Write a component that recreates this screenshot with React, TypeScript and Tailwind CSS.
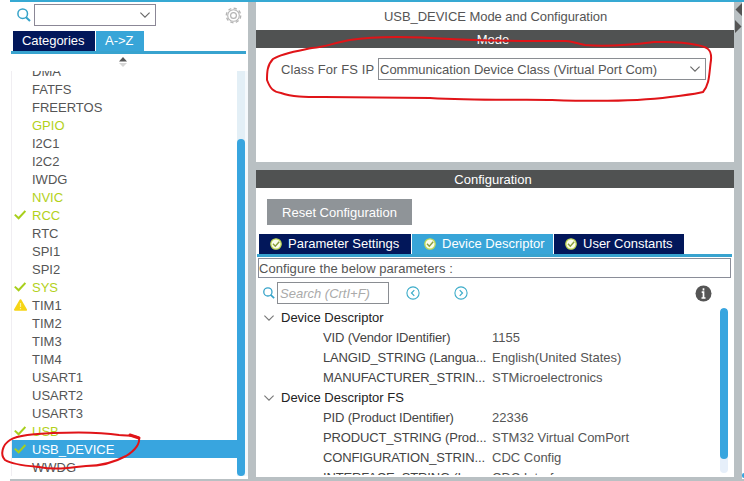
import React from "react";

type Mark = "check" | "warn";
type Peripheral = { name: string; mark?: Mark; green?: boolean; selected?: boolean };

const peripherals: Peripheral[] = [
  { name: "DMA" },
  { name: "FATFS" },
  { name: "FREERTOS" },
  { name: "GPIO", green: true },
  { name: "I2C1" },
  { name: "I2C2" },
  { name: "IWDG" },
  { name: "NVIC", green: true },
  { name: "RCC", green: true, mark: "check" },
  { name: "RTC" },
  { name: "SPI1" },
  { name: "SPI2" },
  { name: "SYS", green: true, mark: "check" },
  { name: "TIM1", mark: "warn" },
  { name: "TIM2" },
  { name: "TIM3" },
  { name: "TIM4" },
  { name: "USART1" },
  { name: "USART2" },
  { name: "USART3" },
  { name: "USB", green: true, mark: "check" },
  { name: "USB_DEVICE", mark: "check", selected: true },
  { name: "WWDG" },
];

const groups = [
  {
    title: "Device Descriptor",
    rows: [
      ["VID (Vendor IDentifier)", "1155"],
      ["LANGID_STRING (Langua...", "English(United States)"],
      ["MANUFACTURER_STRIN...", "STMicroelectronics"],
    ],
  },
  {
    title: "Device Descriptor FS",
    rows: [
      ["PID (Product IDentifier)", "22336"],
      ["PRODUCT_STRING (Prod...", "STM32 Virtual ComPort"],
      ["CONFIGURATION_STRIN...", "CDC Config"],
      ["INTERFACE_STRING (I...", "CDC Interface"],
    ],
  },
];

function Search({ className }: { className: string }) {
  return (
    <svg className={className} viewBox="0 0 14 14" fill="none" stroke="#36a3c9">
      <circle cx="5.7" cy="5.7" r="4.8" strokeWidth="1.5" />
      <path d="M9 9.2 13 13" strokeWidth="2" />
    </svg>
  );
}

function Chevron({ color = "#666" }: { color?: string }) {
  return (
    <svg className="h-[6px] w-[10px] shrink-0" viewBox="0 0 10 6" fill="none" stroke={color} strokeWidth="1.1">
      <path d="M.4.6 5 5.2 9.6.6" />
    </svg>
  );
}

function StatusIcon({ mark }: { mark?: Mark }) {
  if (mark === "check")
    return (
      <svg className="h-[10px] w-[12px]" viewBox="0 0 12 10" fill="none" stroke="#a8cf1c" strokeWidth="2">
        <path d="M.8 4.6 4.6 8.3 11.4 1" />
      </svg>
    );
  if (mark === "warn")
    return (
      <svg className="h-[12px] w-[13px]" viewBox="0 0 13 12">
        <path d="M6.5 1.2 12 10.8H1Z" fill="#f6d516" stroke="#f6d516" strokeWidth="2" strokeLinejoin="round" />
        <path d="M6.5 4v4M6.5 9v1.3" stroke="#fff3a0" strokeWidth="1.2" />
      </svg>
    );
  return null;
}

function TabCheck() {
  return (
    <svg className="size-[12px] shrink-0" viewBox="0 0 12 12">
      <circle cx="6" cy="6" r="5.2" fill="#fbfdec" stroke="#c3d954" strokeWidth="1.3" />
      <path d="M3 5.8 5.3 8.2 9.2 3.8" fill="none" stroke="#8a9f3c" strokeWidth="1.4" />
    </svg>
  );
}

function Gear() {
  return (
    <svg className="size-[17px]" viewBox="0 0 17 17" fill="none" stroke="#b5b5b5">
      <circle cx="8.5" cy="8.5" r="7.2" strokeWidth="1.4" strokeDasharray="3.2 2.45" />
      <circle cx="8.5" cy="8.5" r="5.8" strokeWidth="1.1" />
      <circle cx="8.5" cy="8.5" r="2.9" strokeWidth="1.2" />
    </svg>
  );
}

function StepButton({ d }: { d: string }) {
  return (
    <svg className="size-[14px]" viewBox="0 0 14 14" fill="none" stroke="#3cacc9">
      <circle cx="7" cy="7" r="6.1" strokeWidth="1.1" />
      <path d={d} strokeWidth="1.2" />
    </svg>
  );
}

function Sidebar() {
  return (
    <div className="flex h-full w-[238px] shrink-0 flex-col">
      <div className="flex h-[29px] shrink-0 pt-[2px] pl-[7px]">
        <Search className="mt-[4px] size-[14px]" />
        <div className="ml-[3px] flex h-[22px] w-[122px] items-center justify-end border border-[#8b8796] pr-[5px]">
          <Chevron />
        </div>
        <div className="ml-[69px] pt-[3px]">
          <Gear />
        </div>
      </div>
      <div className="mr-[2px] ml-[1px] flex h-[23px] shrink-0 border-b-[3px] border-[#38a3cf] pl-[2px] text-[13px] leading-[20px] text-white">
        <div className="h-[20px] w-[82px] bg-[#02175a] pl-[9px] tracking-[-0.05px]">Categories</div>
        <div className="ml-[1px] h-[20px] w-[48px] bg-[#38a5d8] pl-[9px]">A-&gt;Z</div>
      </div>
      <div className="flex h-[17px] shrink-0 justify-center pt-[3px] pr-[12px]">
        <svg className="h-[10px] w-[8px]" viewBox="0 0 8 10">
          <path d="M4 0 8 4.5H0Z" fill="#555" />
          <path d="M0 6h8L4 10Z" fill="#d5d5d5" />
        </svg>
      </div>
      <div className="ml-[1px] flex h-[405px] shrink-0 border-l border-[#f0eef2]">
        <div className="flex min-w-0 flex-1 flex-col justify-end overflow-hidden">
          <div>
            {peripherals.map((p) => (
              <div
                key={p.name}
                className={
                  "flex h-[18px] items-center text-[13px] leading-[18px] " +
                  (p.selected ? "bg-[#38a5df] text-white" : p.green ? "text-[#b3d11a]" : "text-[#555]")
                }
              >
                <span className="flex w-[20px] justify-start pl-[2px]">
                  <StatusIcon mark={p.mark} />
                </span>
                <span className="pt-[1px]">{p.name}</span>
              </div>
            ))}
          </div>
        </div>
        <div className="flex w-[8px] shrink-0 flex-col bg-[#e3eff6]">
          <div className="mt-[68px] h-[337px] rounded-full bg-[#38a5df]" />
        </div>
        <div className="w-[3px] shrink-0 bg-[#f5f9fc]" />
      </div>
    </div>
  );
}

function ModePanel() {
  return (
    <section className="flex h-[160px] shrink-0 flex-col bg-white text-[13px] text-[#555]">
      <div className="h-[28px] pl-[128px] leading-[30px] tracking-[-0.05px] whitespace-nowrap">
        USB_DEVICE Mode and Configuration
      </div>
      <div className="h-[18px] bg-[#505252] pr-[4px] text-center leading-[19px] text-white">Mode</div>
      <div className="flex pt-[10px] pl-[25px] leading-[21px] whitespace-nowrap">
        <span className="w-[97px] pt-[1px] tracking-[0.1px]">Class For FS IP</span>
        <div className="flex h-[22px] w-[328px] items-center justify-between border border-[#8a8d92] pr-[5px] pl-[1px]">
          <span className="pt-[1px]">Communication Device Class (Virtual Port Com)</span>
          <Chevron />
        </div>
      </div>
    </section>
  );
}

function ConfigPanel() {
  return (
    <section className="flex h-[307px] shrink-0 flex-col overflow-hidden bg-white text-[13px] text-[#555]">
      <div className="h-[18px] shrink-0 bg-[#505252] pr-[4px] text-center leading-[20px] text-white">Configuration</div>
      <div className="h-[46px] shrink-0 pt-[11px] pl-[11px]">
        <button className="block h-[26px] w-[145px] bg-[#8f9498] text-center leading-[27px] text-white">
          Reset Configuration
        </button>
      </div>
      <div className="mr-[2px] ml-[1px] flex h-[23px] shrink-0 gap-[1px] border-b-[3px] border-[#38a3cf] pl-[2px] leading-[20px] whitespace-nowrap text-white">
        <div className="flex w-[152px] items-center gap-[6px] bg-[#02175a] pl-[11px]">
          <TabCheck />
          <span>Parameter Settings</span>
        </div>
        <div className="flex w-[141px] items-center gap-[6px] bg-[#38a5d8] pl-[12px]">
          <TabCheck />
          <span>Device Descriptor</span>
        </div>
        <div className="flex w-[130px] items-center gap-[6px] bg-[#02175a] pl-[11px]">
          <TabCheck />
          <span>User Constants</span>
        </div>
      </div>
      <div className="mt-[1px] mr-[3px] ml-[2px] h-[20px] shrink-0 border border-[#8a8d98] leading-[20px] tracking-[0.05px]">
        Configure the below parameters :
      </div>
      <div className="flex h-[28px] shrink-0 pt-[4px] pl-[7px]">
        <Search className="mt-[5px] size-[12px]" />
        <div className="ml-[2px] h-[22px] w-[112px] border border-[#8a8d92] pl-[2px] leading-[21px] whitespace-nowrap text-[#aaa] italic">
          Search (CrtI+F)
        </div>
        <div className="mt-[4px] ml-[17px] flex flex-1 gap-[34px]">
          <StepButton d="M8.3 4.2 5.5 7l2.8 2.8" />
          <StepButton d="M5.7 4.2 8.5 7 5.7 9.8" />
        </div>
        <svg className="mt-[3px] mr-[22px] size-[17px]" viewBox="0 0 17 17">
          <circle cx="8.5" cy="8.5" r="8" fill="#555" />
          <path d="M8.5 3.2v2.2M6.7 7.2h1.8v5.6M6.5 13h4" stroke="#fff" strokeWidth="1.7" fill="none" />
        </svg>
      </div>
      <div className="mt-[2px] flex h-[167px] shrink-0 overflow-hidden whitespace-nowrap">
        <div className="flex-1">
          {groups.map((g) => (
            <div key={g.title}>
              <div className="flex h-[20px] items-center pl-[8px] text-[#222]">
                <Chevron color="#777" />
                <span className="ml-[7px] leading-[20px]">{g.title}</span>
              </div>
              {g.rows.map(([k, v]) => (
                <div key={k} className="flex h-[20px] pl-[67px] leading-[20px]">
                  <span className="w-[169px] tracking-[-0.15px] text-[#444]">{k}</span>
                  <span>{v}</span>
                </div>
              ))}
            </div>
          ))}
        </div>
        <div className="mr-[6px] h-[165px] w-[8px] overflow-hidden rounded-full bg-[#e6effa]">
          <div className="h-[151px] rounded-full bg-[#38a5df]" />
        </div>
      </div>
    </section>
  );
}

function Annotations() {
  return (
    <svg
      className="pointer-events-none absolute inset-0 h-[481px] w-[744px]"
      viewBox="0 0 744 481"
      fill="none"
      stroke="#e01418"
      strokeWidth="2"
      strokeLinecap="round"
      strokeLinejoin="round"
    >
      <path d="M312 48C297 51 282 53 273 59C267 65 267 73 267 80C270 88 273 92 281 93C292 97 304 97 324 97L430 98C480 101 530 99 552 100C608 102 640 101 670 97C685 95 696 94 703 92C710 84 709 73 711 60C712 49 707 47 697 45C680 41 668 42 654 42C630 45 606 47 585 45C575 43 572 41 566 41C520 41 480 41 450 39C408 36 374 36 350 40C333 43 326 47 312 48" />
      <path d="M139 438C136 435 127 436 119 435C101 432 77 432 53 433C34 434 18 435 10 440C2 445 0 455 5 460C13 465 28 466 39 467C54 470 69 468 86 466C101 466 115 462 126 456C136 450 140 443 139 438" />
      <path d="M130 435 139 438" strokeWidth="3" />
    </svg>
  );
}

export default function App() {
  return (
    <div className="relative flex h-[481px] w-[744px] flex-col overflow-hidden bg-white pl-[10px] font-['Liberation_Sans',Arial,sans-serif]">
      <div className="h-[2px] shrink-0 bg-[#36a9d3]" />
      <div className="flex h-[477px] shrink-0">
        <Sidebar />
        <div className="w-[8px] shrink-0 bg-[#b9c0c3]" />
        <main className="flex w-[478px] shrink-0 flex-col gap-[8px] bg-[#b9c0c3]">
          <ModePanel />
          <ConfigPanel />
        </main>
        <div className="w-[8px] shrink-0 bg-[#b9c0c3] pt-[1px]">
          <svg className="h-[30px] w-[8px]" viewBox="0 0 8 30" fill="#555">
            <path d="M8 0V13L1.5 6.5ZM1 17V30L7.5 23.5Z" />
          </svg>
        </div>
        <div className="flex w-[2px] items-end pb-[1px]">
          <div className="h-[5px] w-[2px] rounded-l-full bg-[#38a5df]" />
        </div>
      </div>
      <div className="h-[2px] shrink-0 bg-[#b9c0c3]" />
      <Annotations />
    </div>
  );
}
